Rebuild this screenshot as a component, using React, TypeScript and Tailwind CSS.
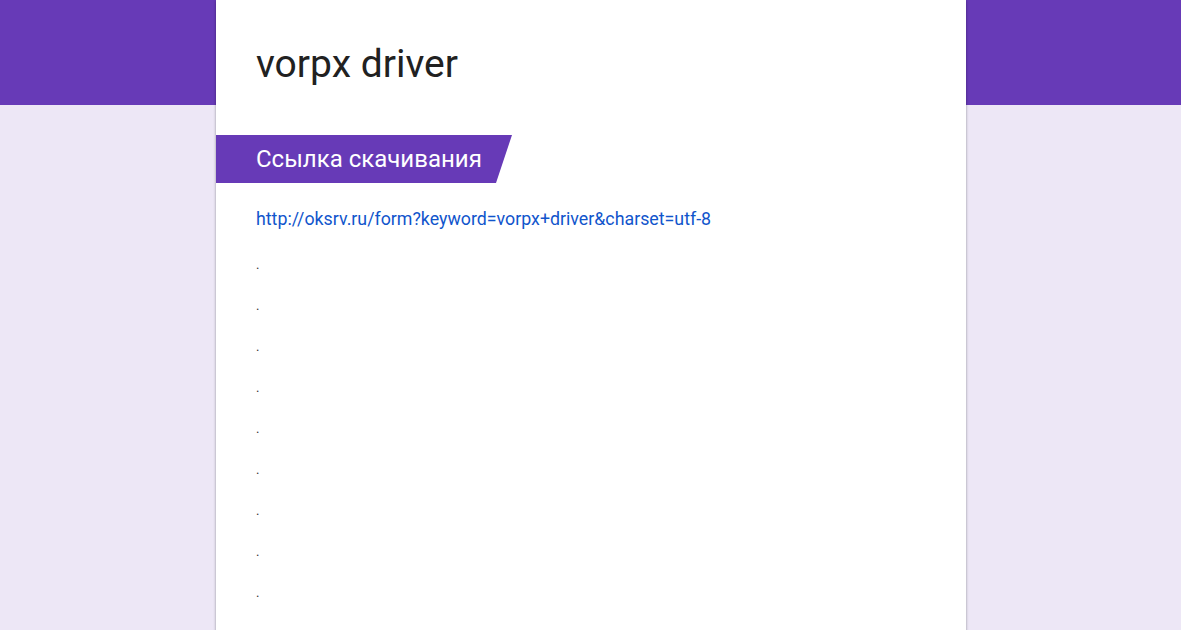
export default function App() {
  const dots = Array.from({ length: 9 });
  return (
    <div className="flex h-[630px] w-[1200px] overflow-hidden bg-white">
      <div className="relative h-full w-[1181px] bg-[#ede7f6]">
        <div className="h-[105px] bg-[#673ab7]" />
        <div className="absolute left-[216px] top-0 h-[700px] w-[750px] bg-white shadow-[0_1px_3px_rgba(0,0,0,0.25),0_0_2px_rgba(0,0,0,0.15)] font-['Roboto',sans-serif]">
          <div className="px-10 pt-[38px]">
            <h1 className="text-[39px] leading-[52px] text-[#212121]">vorpx driver</h1>
          </div>
          <div className="mt-[45px] flex h-[48px] w-[296px] items-center bg-[#673ab7] pl-10 [clip-path:polygon(0_0,100%_0,calc(100%-16px)_100%,0_100%)]">
            <span className="text-[24px] text-white">Ссылка скачивания</span>
          </div>
          <div className="px-10 pt-[26px]">
            <a href="#" className="block text-[17.8px] leading-[20px] text-[#1155cc]">
              http://oksrv.ru/form?keyword=vorpx+driver&amp;charset=utf-8
            </a>
            <div className="mt-[15px] flex flex-col">
              {dots.map((_, i) => (
                <div key={i} className="h-[41px] text-[13px] leading-[41px] text-[#333]">
                  .
                </div>
              ))}
            </div>
          </div>
        </div>
      </div>
    </div>
  );
}
